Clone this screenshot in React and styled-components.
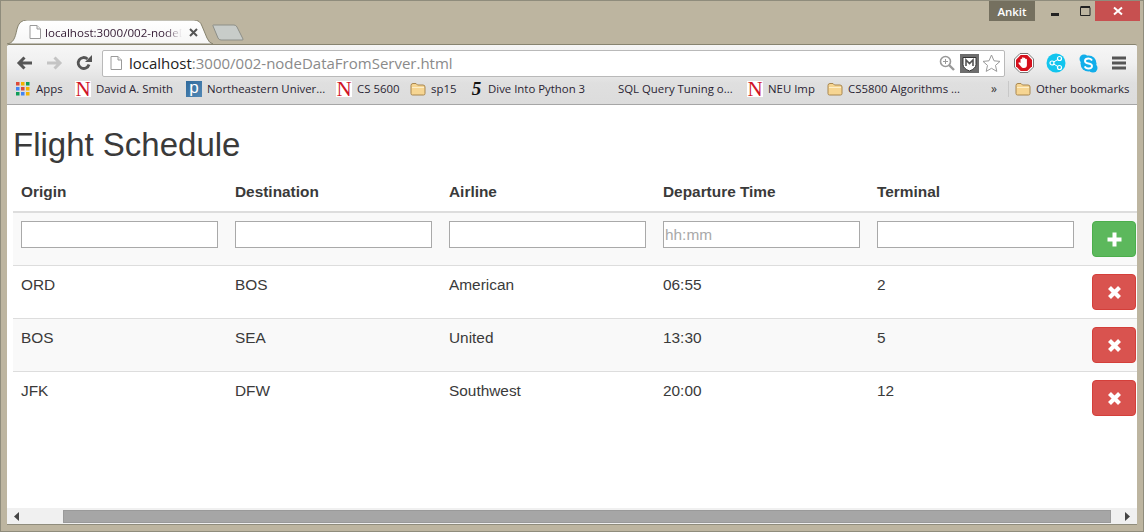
import React from "react";
import styled, { createGlobalStyle } from "styled-components";

const GlobalStyle = createGlobalStyle`
  html, body {
    margin: 0;
    height: 532px;
    overflow: hidden;
    background: #bdb5a0;
  }
`;

const Window = styled.div`
  display: flex;
  flex-direction: column;
  width: 1144px;
  height: 532px;
  box-sizing: border-box;
  background: #bdb5a0;
  border: 1px solid #8f8c7c;
  font-family: "Open Sans", "Noto Sans", sans-serif;
  color: #222;
`;

const TitleBar = styled.div`
  display: flex;
  justify-content: space-between;
  height: 43px;
  flex: none;
`;

const TabStrip = styled.div`
  display: flex;
  align-items: flex-end;
  padding-left: 6px;
`;

const Tab = styled.div`
  position: relative;
  display: flex;
  align-items: center;
  width: 206px;
  height: 24px;
  box-sizing: border-box;
  padding: 0 0 0 20px;
`;

const TabShape = styled.svg`
  position: absolute;
  left: 0;
  top: 0;
`;

const TabTitle = styled.span`
  position: relative;
  margin-left: 2px;
  width: 137px;
  white-space: nowrap;
  font-size: 11.6px;
  color: #331a33;
  -webkit-mask-image: linear-gradient(to right, #000 120px, transparent 137px);
  mask-image: linear-gradient(to right, #000 120px, transparent 137px);
`;

const TabClose = styled.svg`
  position: relative;
  margin-left: 7px;
`;

const NewTab = styled.svg`
  margin: 0 0 3px -1px;
`;

const Controls = styled.div`
  display: flex;
  align-items: flex-start;
  margin-right: 3px;
`;

const Profile = styled.div`
  display: flex;
  align-items: center;
  justify-content: center;
  width: 46px;
  height: 20px;
  background: #75705f;
  color: #fff;
  font-size: 11.5px;
  font-weight: 600;
`;

const WinButton = styled.div`
  display: flex;
  align-items: center;
  justify-content: center;
  width: ${(p) => p.$w}px;
  height: 20px;
  background: ${(p) => p.$bg || "transparent"};
`;

const Chrome = styled.div`
  flex: none;
  margin: 0 6px;
  height: 61px;
  box-sizing: border-box;
  display: flex;
  flex-direction: column;
  border-top: 1px solid #87836f;
  border-bottom: 1px solid #a6a6a6;
  border-radius: 2px 2px 0 0;
  background: linear-gradient(#f6f6f6 0, #f0f0f0 30%, #dfdfdf 65%, #dcdcdc 100%);
`;

const Toolbar = styled.div`
  display: flex;
  align-items: center;
  height: 36px;
  flex: none;
  padding-left: 9px;
`;

const NavIcon = styled.svg`
  flex: none;
  margin-right: ${(p) => p.$mr || 0}px;
`;

const Omnibox = styled.div`
  display: flex;
  align-items: center;
  width: 903px;
  height: 27px;
  box-sizing: border-box;
  margin-left: 10px;
  padding: 0 3px 0 5px;
  background: #fff;
  border: 1px solid #b9b9b9;
  border-radius: 2px;
  flex: none;
`;

const Url = styled.div`
  flex: 1;
  margin-left: 5px;
  font-size: 15px;
  white-space: nowrap;
  color: #8a8a8a;

  b {
    font-weight: 400;
    color: #222;
  }
`;

const Extensions = styled.div`
  display: flex;
  align-items: center;
  gap: 12px;
  margin-left: 8px;
`;

const Bookmarks = styled.div`
  display: flex;
  align-items: center;
  height: 23px;
  box-sizing: border-box;
  padding: 0 0 8px 8px;
  font-size: 11.4px;
  flex: none;
`;

const Bookmark = styled.div`
  display: flex;
  align-items: center;
  flex: none;
  width: ${(p) => p.$w}px;
  white-space: nowrap;
  color: #2a1f33;
`;

const BookmarkIcon = styled.span`
  display: flex;
  align-items: center;
  justify-content: center;
  flex: none;
  width: ${(p) => p.$w || 16}px;
  height: 16px;
  margin-right: 5px;
`;

const NuLogo = styled.span`
  display: block;
  width: 16px;
  height: 16px;
  background: #fff;
  color: #d01427;
  text-align: center;
  font: 400 21px/17px "Liberation Serif", serif;
`;

const PLogo = styled.span`
  display: block;
  width: 16px;
  height: 16px;
  background: linear-gradient(135deg, #2f6a9c, #5288b5);
  color: #fff;
  text-align: center;
  font: 400 17px/13px "Liberation Sans", sans-serif;
`;

const FiveLogo = styled.span`
  color: #111;
  font: italic 700 19px/16px "Liberation Serif", serif;
`;

const Chevrons = styled.div`
  width: 17px;
  font-size: 12px;
  color: #333;
`;

const Divider = styled.div`
  width: 1px;
  height: 16px;
  background: #c8c8c8;
  margin-right: 6px;
`;

const Page = styled.main`
  flex: none;
  margin: 0 6px;
  height: 403px;
  overflow: hidden;
  background: #fff;
  font-family: "Liberation Sans", Arial, sans-serif;
  color: #3a3a3a;
`;

const Heading = styled.h2`
  margin: 22px 0 0 6px;
  font-size: 33px;
  line-height: 36px;
  font-weight: 400;
`;

const Table = styled.table`
  margin: 11px 0 0 6px;
  width: 1124px;
  table-layout: fixed;
  border-collapse: collapse;
  font-size: 15.4px;
  line-height: 22px;
`;

const Col = styled.col`
  width: ${(p) => p.$w}px;
`;

const Th = styled.th`
  height: 38px;
  padding: 0 7px 1px;
  box-sizing: border-box;
  text-align: left;
  font-weight: 700;
  border-bottom: 2px solid #ddd;

  &:first-child {
    padding-left: 8px;
  }
`;

const Row = styled.tr`
  background: ${(p) => (p.$odd ? "#f9f9f9" : "#fff")};
  border-bottom: 1px solid #ddd;

  &:last-child {
    border-bottom: 0;
  }
`;

const Td = styled.td`
  height: 52px;
  box-sizing: border-box;
  padding: 8px 7px;
  vertical-align: top;

  &:first-child {
    padding-left: 8px;
  }
`;

const ActionCell = styled(Td)`
  padding: 8px 0 8px 8px;
`;

const TextInput = styled.input`
  display: block;
  width: 197px;
  height: 27px;
  box-sizing: border-box;
  padding: 1px;
  border: 1px solid #a9a9a9;
  background: #fff;
  font: 15.4px "Liberation Sans", Arial, sans-serif;
  outline: none;

  &::placeholder {
    color: #a9a9a9;
    opacity: 1;
  }
`;

const ActionButton = styled.button`
  display: flex;
  align-items: center;
  justify-content: center;
  width: 44px;
  height: 36px;
  padding: 0;
  border: 1px solid ${(p) => (p.$add ? "#4cae4c" : "#d43f3a")};
  border-radius: 4px;
  background: ${(p) => (p.$add ? "#5cb85c" : "#d9534f")};
`;

const Scrollbar = styled.div`
  flex: none;
  display: flex;
  align-items: center;
  margin: 0 6px;
  height: 17px;
  box-sizing: border-box;
  padding-left: 7px;
  background: #f0f0f0;
  border-bottom: 1px solid #8f8c7c;
`;

const Thumb = styled.div`
  width: 1048px;
  height: 13px;
  margin: 0 14px 0 44px;
  box-sizing: border-box;
  background: #a6a6a6;
  border: 1px solid #9a9a9a;
`;

const rows = [
  ["ORD", "BOS", "American", "06:55", "2"],
  ["BOS", "SEA", "United", "13:30", "5"],
  ["JFK", "DFW", "Southwest", "20:00", "12"],
];

const columns = ["Origin", "Destination", "Airline", "Departure Time", "Terminal"];

const DocIcon = ({ size = 16 }) => (
  <svg width={size} height={size} viewBox="0 0 16 16">
    <path d="M3 1.500h7l3.500 3.500v9.500H3z" fill="#fff" stroke="#9a9a9a" />
    <path d="M10 1.500v3.500h3.500" fill="#eee" stroke="#9a9a9a" />
  </svg>
);

const Folder = () => (
  <svg width="16" height="14" viewBox="0 0 16 14">
    <path
      d="M1 3.500q0-2 2-2h3l1.500 1.500h5.500q2 0 2 2v6.500q0 1.500-1.500 1.500h-11q-1.500 0-1.500-1.500z"
      fill="#f6d592"
      stroke="#a8864f"
    />
    <path d="M2 5.500h12" stroke="#fdeec8" />
  </svg>
);

const appColors = ["#dc4a38", "#f4b400", "#0f9d58", "#4285f4", "#dc4a38", "#f4b400", "#0f9d58", "#4285f4", "#f4b400"];

const AppsGrid = () => (
  <svg width="14" height="14" viewBox="0 0 14 14">
    {appColors.map((c, i) => (
      <rect key={i} x={(i % 3) * 5} y={Math.floor(i / 3) * 5} width="3.500" height="3.500" fill={c} />
    ))}
  </svg>
);

const Nu = () => (
  <BookmarkIcon>
    <NuLogo>N</NuLogo>
  </BookmarkIcon>
);

function App() {
  return (
    <Window>
      <GlobalStyle />
      <TitleBar>
        <TabStrip>
          <Tab>
            <TabShape width="206" height="24" viewBox="0 0 206 24">
              <defs>
                <linearGradient id="tabFill" x1="0" y1="0" x2="0" y2="1">
                  <stop offset="0" stopColor="#fff" />
                  <stop offset="1" stopColor="#f6f6f6" />
                </linearGradient>
              </defs>
              <path
                d="M0 24C6 23 8 19 10 9Q12 0 20 0H187Q193 0 195 6L200 18Q202 23 206 24Z"
                fill="url(#tabFill)"
                stroke="#87836f"
              />
            </TabShape>
            <span style={{ position: "relative", display: "flex" }}>
              <DocIcon />
            </span>
            <TabTitle>localhost:3000/002-nodeD</TabTitle>
            <TabClose width="9" height="9" viewBox="0 0 9 9">
              <path d="M1 1l7 7M8 1l-7 7" stroke="#555" strokeWidth="2" />
            </TabClose>
          </Tab>
          <NewTab width="32" height="17" viewBox="0 0 32 17">
            <path
              d="M1.500 1H22q2 0 3 2l6 12q.5 1-1 1H9q-2 0-3-2L1 2q-.5-1 .5-1z"
              fill="#c8ccc9"
              stroke="#8d8f88"
            />
          </NewTab>
        </TabStrip>
        <Controls>
          <Profile>Ankit</Profile>
          <WinButton $w={40}>
            <svg width="10" height="10" viewBox="0 0 10 10">
              <rect x="1" y="7" width="8" height="3" fill="#222" />
            </svg>
          </WinButton>
          <WinButton $w={20}>
            <svg width="11" height="10" viewBox="0 0 11 10">
              <path d="M.5 1.500h9.500v8H.5z" fill="none" stroke="#222" />
              <path d="M.5 1h9.500" stroke="#222" strokeWidth="2" />
            </svg>
          </WinButton>
          <WinButton $w={45} $bg="#c75050">
            <svg width="10" height="10" viewBox="0 0 10 10">
              <path d="M1 1.500l8 7M9 1.500l-8 7" stroke="#fff" strokeWidth="2" />
            </svg>
          </WinButton>
        </Controls>
      </TitleBar>

      <Chrome>
        <Toolbar>
          <NavIcon width="17" height="14" viewBox="0 0 17 14" $mr={13}>
            <path d="M16 7H4M8.500 1.500L3 7l5.500 5.500" fill="none" stroke="#555" strokeWidth="3" />
          </NavIcon>
          <NavIcon width="17" height="14" viewBox="0 0 17 14" $mr={13}>
            <path d="M1 7h12M8.500 1.500L14 7l-5.500 5.500" fill="none" stroke="#c4c4c4" strokeWidth="3" />
          </NavIcon>
          <NavIcon width="16" height="16" viewBox="0 0 16 16">
            <path d="M13 9.500A5.500 5.500 0 1 1 11.500 4" fill="none" stroke="#555" strokeWidth="2.800" />
            <path d="M9 7h7V0z" fill="#555" />
          </NavIcon>
          <Omnibox>
            <DocIcon />
            <Url>
              <b>localhost</b>:3000/002-nodeDataFromServer.html
            </Url>
            <svg width="16" height="16" viewBox="0 0 16 16">
              <circle cx="6.500" cy="6.500" r="5" fill="#fff" stroke="#999" strokeWidth="1.600" />
              <path d="M10 10l5 5" stroke="#999" strokeWidth="2.400" />
              <path d="M4 6.500h5M6.500 4v5" stroke="#999" />
            </svg>
            <svg width="19" height="19" viewBox="0 0 19 19" style={{ marginLeft: 5 }}>
              <rect width="19" height="19" fill="#6d6d6d" />
              <path d="M3 3.500h13v7q0 4-6.500 6.500Q3 14.500 3 10.500z" fill="#fff" stroke="#333" />
              <path d="M6 12V6l3.500 3.500L13 6v6" fill="none" stroke="#555" strokeWidth="1.600" />
            </svg>
            <svg width="19" height="18" viewBox="0 0 19 18" style={{ marginLeft: 3 }}>
              <path
                d="M9.500 1l2.500 5.800 6 .6-4.500 4 1.300 6-5.300-3.100-5.300 3.100 1.300-6-4.500-4 6-.6z"
                fill="#fff"
                stroke="#999"
              />
            </svg>
          </Omnibox>
          <Extensions>
            <svg width="20" height="20" viewBox="0 0 20 20" style={{ marginLeft: 1 }}>
              <path d="M6 .5h8L19.500 6v8L14 19.500H6L.5 14V6z" fill="#fff" stroke="#777" />
              <path d="M6.700 2h6.600L18 6.700v6.600L13.300 18H6.700L2 13.300V6.700z" fill="#d5101c" />
              <path
                d="M6.500 10V6.500a.8.800 0 0 1 1.600 0V5a.8.800 0 0 1 1.600 0v.5a.8.800 0 0 1 1.600 0v1a.8.800 0 0 1 1.600 0V12q0 3-3 3H9.500Q8 15 7 13.500L4.500 10.500q-.3-1 .6-1.200z"
                fill="#fff"
              />
            </svg>
            <svg width="20" height="20" viewBox="0 0 20 20">
              <circle cx="10" cy="10" r="9.500" fill="#12c5ee" />
              <path d="M13.500 5.500L6 10l7.500 4.500" fill="none" stroke="#fff" />
              <circle cx="13.500" cy="5.500" r="2" fill="#12c5ee" stroke="#fff" strokeWidth="1.200" />
              <circle cx="6" cy="10" r="2" fill="#12c5ee" stroke="#fff" strokeWidth="1.200" />
              <circle cx="13.500" cy="14.500" r="2" fill="#12c5ee" stroke="#fff" strokeWidth="1.200" />
            </svg>
            <svg width="19" height="19" viewBox="0 0 19 19" style={{ marginLeft: 1 }}>
              <circle cx="5" cy="5" r="4.500" fill="#12aeea" />
              <circle cx="14" cy="14" r="4.500" fill="#12aeea" />
              <circle cx="9.500" cy="9.500" r="8" fill="#12aeea" />
              <path
                d="M13 6.500Q12 4.500 9.500 4.500 6 4.500 6 7q0 2 3.500 2.500 3.500.6 3.500 2.500 0 2.500-3.500 2.500-2.800 0-3.700-2.200"
                fill="none"
                stroke="#fff"
                strokeWidth="1.900"
              />
            </svg>
            <svg width="14" height="14" viewBox="0 0 14 14" style={{ marginLeft: 2 }}>
              <path d="M0 2h14M0 7h14M0 12h14" stroke="#555" strokeWidth="3" />
            </svg>
          </Extensions>
        </Toolbar>

        <Bookmarks>
          <Bookmark $w={60}>
            <BookmarkIcon>
              <AppsGrid />
            </BookmarkIcon>
            Apps
          </Bookmark>
          <Bookmark $w={111}>
            <Nu />
            David A. Smith
          </Bookmark>
          <Bookmark $w={150}>
            <BookmarkIcon>
              <PLogo>p</PLogo>
            </BookmarkIcon>
            Northeastern Univer...
          </Bookmark>
          <Bookmark $w={74}>
            <Nu />
            CS 5600
          </Bookmark>
          <Bookmark $w={60}>
            <BookmarkIcon>
              <Folder />
            </BookmarkIcon>
            sp15
          </Bookmark>
          <Bookmark $w={148}>
            <BookmarkIcon $w={13}>
              <FiveLogo>5</FiveLogo>
            </BookmarkIcon>
            Dive Into Python 3
          </Bookmark>
          <Bookmark $w={129}>SQL Query Tuning o...</Bookmark>
          <Bookmark $w={80}>
            <Nu />
            NEU Imp
          </Bookmark>
          <Bookmark $w={164}>
            <BookmarkIcon>
              <Folder />
            </BookmarkIcon>
            CS5800 Algorithms ...
          </Bookmark>
          <Chevrons>»</Chevrons>
          <Divider />
          <Bookmark $w={115}>
            <BookmarkIcon>
              <Folder />
            </BookmarkIcon>
            Other bookmarks
          </Bookmark>
        </Bookmarks>
      </Chrome>

      <Page>
        <Heading>Flight Schedule</Heading>
        <Table>
          <colgroup>
            <Col $w={215} />
            {columns.slice(1).map((c) => (
              <Col key={c} $w={214} />
            ))}
            <Col $w={53} />
          </colgroup>
          <thead>
            <tr>
              {columns.map((c) => (
                <Th key={c}>{c}</Th>
              ))}
              <Th />
            </tr>
          </thead>
          <tbody>
            <Row $odd>
              {columns.map((c) => (
                <Td key={c}>
                  <TextInput placeholder={c === "Departure Time" ? "hh:mm" : undefined} />
                </Td>
              ))}
              <ActionCell>
                <ActionButton $add aria-label="Add">
                  <svg width="15" height="15" viewBox="0 0 15 15">
                    <path d="M7.500 .5v14M.5 7.500h14" stroke="#fff" strokeWidth="4" />
                  </svg>
                </ActionButton>
              </ActionCell>
            </Row>
            {rows.map((row, i) => (
              <Row key={row[0]} $odd={i === 1}>
                {row.map((v, j) => (
                  <Td key={j}>{v}</Td>
                ))}
                <ActionCell>
                  <ActionButton aria-label="Delete">
                    <svg width="15" height="15" viewBox="0 0 15 15">
                      <path d="M2.500 2.500l10 10M12.500 2.500l-10 10" stroke="#fff" strokeWidth="4.200" />
                    </svg>
                  </ActionButton>
                </ActionCell>
              </Row>
            ))}
          </tbody>
        </Table>
      </Page>

      <Scrollbar>
        <svg width="5" height="9" viewBox="0 0 5 9">
          <path d="M5 0v9L0 4.500z" fill="#444" />
        </svg>
        <Thumb />
        <svg width="5" height="9" viewBox="0 0 5 9">
          <path d="M0 0v9l5-4.500z" fill="#444" />
        </svg>
      </Scrollbar>
    </Window>
  );
}

export default App;
